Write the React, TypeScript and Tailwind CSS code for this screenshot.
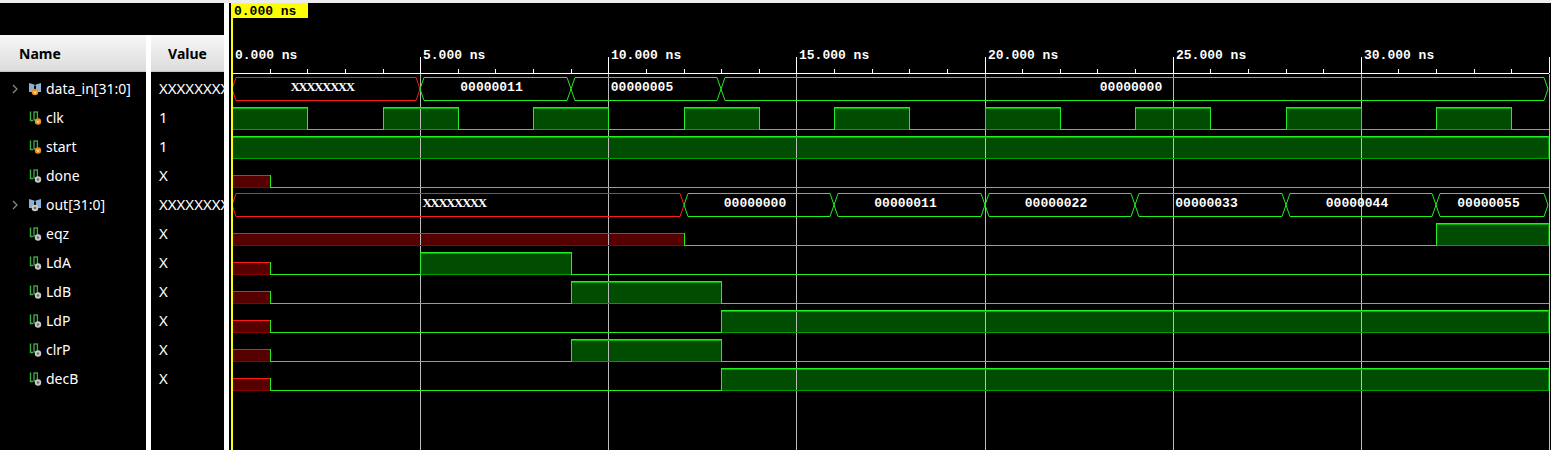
import React from 'react';

type Val = string; // '0' | '1' | 'X' for bits, hex text for buses

interface Signal {
  name: string;
  value: string;
  bus?: boolean;
  input?: boolean;
  changes: [number, Val][];
}

const END = 35;
const px = (t: number) => Math.round(232 + (t * 1317) / END);
const ROW_TOP = 74;
const ROW_H = 29;

const clkChanges: [number, Val][] = [];
for (let t = 0; t < END; t += 2) clkChanges.push([t, (t / 2) % 2 === 0 ? '1' : '0']);

const signals: Signal[] = [
  {
    name: 'data_in[31:0]',
    value: 'XXXXXXXX',
    bus: true,
    input: true,
    changes: [[0, 'X'], [5, '00000011'], [9, '00000005'], [13, '00000000']],
  },
  { name: 'clk', value: '1', input: true, changes: clkChanges },
  { name: 'start', value: '1', input: true, changes: [[0, '1']] },
  { name: 'done', value: 'X', changes: [[0, 'X'], [1, '0']] },
  {
    name: 'out[31:0]',
    value: 'XXXXXXXX',
    bus: true,
    changes: [
      [0, 'X'],
      [12, '00000000'],
      [16, '00000011'],
      [20, '00000022'],
      [24, '00000033'],
      [28, '00000044'],
      [32, '00000055'],
    ],
  },
  { name: 'eqz', value: 'X', changes: [[0, 'X'], [12, '0'], [32, '1']] },
  { name: 'LdA', value: 'X', changes: [[0, 'X'], [1, '0'], [5, '1'], [9, '0']] },
  { name: 'LdB', value: 'X', changes: [[0, 'X'], [1, '0'], [9, '1'], [13, '0']] },
  { name: 'LdP', value: 'X', changes: [[0, 'X'], [1, '0'], [13, '1']] },
  { name: 'clrP', value: 'X', changes: [[0, 'X'], [1, '0'], [9, '1'], [13, '0']] },
  { name: 'decB', value: 'X', changes: [[0, 'X'], [1, '0'], [13, '1']] },
];

function segments(changes: [number, Val][]) {
  return changes.map(([t, v], i) => ({
    x0: px(t),
    x1: i + 1 < changes.length ? px(changes[i + 1][0]) : px(END),
    v,
  }));
}

function BusIcon({ input }: { input?: boolean }) {
  return (
    <svg width="14" height="14" viewBox="0 0 14 14" className="shrink-0">
      <path d="M1 1 L6 2.5 L6 10 L1 10 Z" fill="#8fb0d2" />
      <path d="M8 2.5 L13 1 L13 10 L8 10 Z" fill="#8fb0d2" />
      <path d="M6 2.5 L7 4 L8 2.5" stroke="#5c7ea3" fill="none" />
      {input ? (
        <>
          <circle cx="7" cy="10" r="3.3" fill="#e8921c" />
          <path d="M5.6 9 L7 11.6 L8.4 9" stroke="#fff3d0" strokeWidth="0.9" fill="none" />
        </>
      ) : (
        <>
          <circle cx="7" cy="10" r="3.3" fill="#c8c8c8" />
          <circle cx="7" cy="10" r="1.3" fill="#6a6a6a" />
        </>
      )}
    </svg>
  );
}

function BitIcon({ input }: { input?: boolean }) {
  return (
    <svg width="14" height="14" viewBox="0 0 14 14" className="shrink-0">
      <path d="M2.5 0.5 L2.5 9.5 L5 9.5" stroke="#3fae4a" strokeWidth="1.4" fill="none" />
      <rect x="6" y="1" width="3.4" height="8" stroke="#3fae4a" strokeWidth="1.3" fill="none" />
      {input ? (
        <>
          <circle cx="10" cy="10.5" r="3.2" fill="#e8921c" />
          <path d="M8.8 9.6 L10 11.8 L11.2 9.6" stroke="#fff3d0" strokeWidth="0.8" fill="none" />
        </>
      ) : (
        <>
          <circle cx="10" cy="10.5" r="3.2" fill="#c8c8c8" />
          <circle cx="10" cy="10.5" r="1.2" fill="#6a6a6a" />
        </>
      )}
    </svg>
  );
}

function Waves() {
  const majors = [0, 5, 10, 15, 20, 25, 30];
  const minors: number[] = [];
  for (let t = 1; t < END; t++) if (t % 5 !== 0) minors.push(t);

  const fills: React.ReactNode[] = [];
  const traces: React.ReactNode[] = [];

  signals.forEach((s, r) => {
    const top = ROW_TOP + r * ROW_H;
    const segs = segments(s.changes);
    if (s.bus) {
      const bt = top + 3.5;
      const bb = top + 26.5;
      const mid = (bt + bb) / 2;
      segs.forEach((g, i) => {
        const isX = g.v === 'X';
        const last = i === segs.length - 1;
        const x1 = last ? g.x1 - 1 : g.x1;
        const pts = `${g.x0},${mid} ${g.x0 + 4},${bt} ${x1 - 4},${bt} ${x1},${mid} ${x1 - 4},${bb} ${g.x0 + 4},${bb}`;
        traces.push(
          <polygon key={`b${r}-${i}`} points={pts} fill="none" stroke={isX ? '#ff1a1a' : '#22ee22'} strokeWidth="1" />
        );
        traces.push(
          <text
            key={`t${r}-${i}`}
            x={(g.x0 + g.x1) / 2 - 4}
            y={top + 17}
            textAnchor="middle"
            fill="#ffffff"
            className={
              isX
                ? "font-['Liberation_Serif',serif] font-bold text-[13px] tracking-[-1.5px]"
                : "font-['Liberation_Mono',monospace] font-bold text-[13px]"
            }
          >
            {isX ? 'XXXXXXXX' : g.v}
          </text>
        );
      });
    } else {
      const hi = top + 4.5;
      const lo = top + 26.5;
      const mid = top + 14.5;
      const level = (v: Val) => (v === '1' ? hi : v === '0' ? lo : mid);
      segs.forEach((g, i) => {
        if (g.v === '1') {
          fills.push(<rect key={`f${r}-${i}`} x={g.x0} y={hi} width={g.x1 - g.x0} height={lo - hi} fill="#004c00" />);
          traces.push(
            <line key={`hb${r}-${i}`} x1={g.x0} y1={lo} x2={g.x1} y2={lo} stroke="#00a000" />,
            <line key={`hi${r}-${i}`} x1={g.x0} y1={hi + 1} x2={g.x1} y2={hi + 1} stroke="#00b400" />,
            <line key={`h${r}-${i}`} x1={g.x0} y1={hi} x2={g.x1} y2={hi} stroke="#22ee22" />
          );
        } else if (g.v === '0') {
          traces.push(<line key={`l${r}-${i}`} x1={g.x0} y1={lo} x2={g.x1} y2={lo} stroke="#22ee22" />);
        } else {
          fills.push(<rect key={`f${r}-${i}`} x={g.x0} y={mid} width={g.x1 - g.x0} height={lo - mid} fill="#560000" />);
          traces.push(
            <line key={`xb${r}-${i}`} x1={g.x0} y1={lo} x2={g.x1} y2={lo} stroke="#8c0000" />,
            <line key={`x${r}-${i}`} x1={g.x0} y1={mid} x2={g.x1} y2={mid} stroke="#ff1a1a" />
          );
        }
        if (i > 0) {
          const a = level(segs[i - 1].v);
          const b = level(g.v);
          traces.push(
            <line
              key={`e${r}-${i}`}
              x1={g.x0 + 0.5}
              y1={Math.min(a, b) - 0.5}
              x2={g.x0 + 0.5}
              y2={Math.max(a, b) + 0.5}
              stroke="#22ee22"
            />
          );
        }
        if (g.v === '1' && i === segs.length - 1) {
          traces.push(
            <line key={`re${r}`} x1={g.x1 - 0.5} y1={hi} x2={g.x1 - 0.5} y2={lo} stroke="#00a000" />
          );
        }
      });
    }
  });

  return (
    <svg width="1322" height="447" viewBox="229 3 1322 447" className="shrink-0 block">
      <rect x="229" y="3" width="1322" height="447" fill="#000" />
      {/* ruler */}
      <line x1="232" y1="73.5" x2="1549" y2="73.5" stroke="#ffffff" />
      {minors.map((t) => (
        <line key={`m${t}`} x1={px(t) + 0.5} y1="69" x2={px(t) + 0.5} y2="73" stroke="#ffffff" />
      ))}
      {majors.slice(1).map((t) => (
        <line key={`M${t}`} x1={px(t) + 0.5} y1="57" x2={px(t) + 0.5} y2="73" stroke="#ffffff" />
      ))}
      <line x1="1549.5" y1="57" x2="1549.5" y2="73" stroke="#ffffff" />
      {majors.map((t) => (
        <text
          key={`L${t}`}
          x={px(t) + 3}
          y="59"
          fill="#ffffff"
          className="font-['Liberation_Mono',monospace] font-bold text-[13px]"
        >
          {`${t}.000 ns`}
        </text>
      ))}
      {fills}
      {majors.slice(1).map((t) => (
        <line key={`g${t}`} x1={px(t) + 0.5} y1="74" x2={px(t) + 0.5} y2="450" stroke="#bcbcbc" />
      ))}
      <line x1="1549.5" y1="74" x2="1549.5" y2="450" stroke="#bcbcbc" />
      {traces}
      {/* cursor */}
      <rect x="231" y="3" width="2" height="447" fill="#ffff00" />
      <rect x="232" y="3" width="76" height="15" fill="#ffff00" />
      <text x="234" y="15" fill="#000000" className="font-['Liberation_Mono',monospace] font-bold text-[13px]">
        0.000 ns
      </text>
    </svg>
  );
}

export default function App() {
  return (
    <div className="w-[1551px] h-[450px] bg-black overflow-hidden flex flex-col font-['Noto_Sans',sans-serif]">
      <div className="h-[3px] shrink-0 bg-[#ececec]" />
      <div className="flex flex-1 min-h-0">
        {/* Name column */}
        <div className="w-[146px] shrink-0 flex flex-col">
          <div className="h-[32px]" />
          <div className="h-[37px] flex items-center pl-[19px] bg-gradient-to-b from-[#f7f7f7] to-[#dcdcdc] border-b border-[#c4c4c4] text-[14px] font-bold text-black">
            Name
          </div>
          <div className="h-[2px]" />
          {signals.map((s) => (
            <div key={s.name} className="h-[29px] flex items-center text-[14px] text-white whitespace-nowrap">
              <div className="w-[28px] shrink-0 flex justify-center pl-[2px]">
                {s.bus && (
                  <svg width="8" height="10" viewBox="0 0 8 10">
                    <path d="M2 1 L6 5 L2 9" stroke="#8a8a8a" strokeWidth="1.2" fill="none" />
                  </svg>
                )}
              </div>
              <div className="w-[18px] shrink-0 flex">
                {s.bus ? <BusIcon input={s.input} /> : <BitIcon input={s.input} />}
              </div>
              <span>{s.name}</span>
            </div>
          ))}
        </div>
        <div className="w-[5px] shrink-0 flex flex-col">
          <div className="h-[32px]" />
          <div className="flex-1 bg-white" />
        </div>
        {/* Value column */}
        <div className="w-[73px] shrink-0 flex flex-col overflow-hidden">
          <div className="h-[32px]" />
          <div className="h-[37px] flex items-center justify-center bg-gradient-to-b from-[#f7f7f7] to-[#dcdcdc] border-b border-[#c4c4c4] text-[14px] font-bold text-black">
            Value
          </div>
          <div className="h-[2px]" />
          {signals.map((s) => (
            <div key={s.name} className="h-[29px] flex items-center pl-[8px] text-[15px] text-white whitespace-nowrap">
              {s.value}
            </div>
          ))}
        </div>
        <div className="w-[5px] shrink-0 bg-white" />
        <Waves />
      </div>
    </div>
  );
}
